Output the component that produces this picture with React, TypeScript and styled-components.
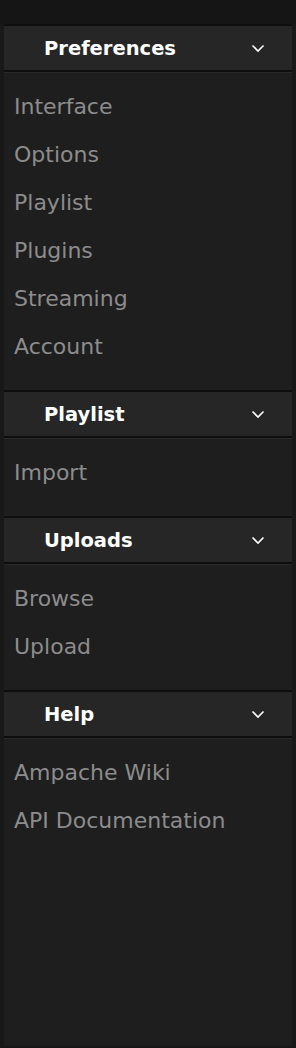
import React from "react";
import styled, { createGlobalStyle } from "styled-components";

const Global = createGlobalStyle`
  html, body { margin: 0; padding: 0; background: #181818; }
  #root { min-height: 1048px; }
`;

const Sidebar = styled.nav`
  box-sizing: border-box;
  width: 296px;
  height: 1048px;
  padding: 0 4px 2px;
  background: #181818;
  display: flex;
  flex-direction: column;
`;

const TopStrip = styled.div`
  height: 24px;
  background: #151515;
  margin: 0 -4px;
`;

const Panel = styled.div`
  flex: 1;
  background: #1e1e1e;
  display: flex;
  flex-direction: column;
`;

const Section = styled.section`
  display: flex;
  flex-direction: column;
`;

const Header = styled.div`
  box-sizing: border-box;
  height: 48px;
  border-top: 2px solid #0e0e0e;
  border-bottom: 2px solid #0e0e0e;
  background: #262626;
  display: flex;
  align-items: center;
  justify-content: space-between;
  padding: 0 27px 0 40px;
  box-shadow: 0 1px 0 #2a2a2a;
`;

const Title = styled.span`
  font-family: "DejaVu Sans", sans-serif;
  font-weight: bold;
  font-size: 19.5px;
  color: #ffffff;
`;

const List = styled.ul`
  list-style: none;
  margin: 0;
  padding: 11px 0 19px;
`;

const Item = styled.li`
  height: 48px;
  line-height: 48px;
  padding-left: 10px;
  font-family: "DejaVu Sans", sans-serif;
  font-size: 22px;
  color: #8c8c8c;
  white-space: nowrap;
`;

const Chevron = () => (
  <svg width="14" height="10" viewBox="0 0 14 10">
    <path d="M1.5 2.5 L7 8 L12.5 2.5" fill="none" stroke="#fff" strokeWidth="1.6" />
  </svg>
);

const sections = [
  { title: "Preferences", items: ["Interface", "Options", "Playlist", "Plugins", "Streaming", "Account"] },
  { title: "Playlist", items: ["Import"] },
  { title: "Uploads", items: ["Browse", "Upload"] },
  { title: "Help", items: ["Ampache Wiki", "API Documentation"] },
];

export default function App() {
  return (
    <>
      <Global />
      <Sidebar>
        <TopStrip />
        <Panel>
          {sections.map((s) => (
            <Section key={s.title}>
              <Header>
                <Title>{s.title}</Title>
                <Chevron />
              </Header>
              <List>
                {s.items.map((i) => (
                  <Item key={i}>{i}</Item>
                ))}
              </List>
            </Section>
          ))}
        </Panel>
      </Sidebar>
    </>
  );
}
